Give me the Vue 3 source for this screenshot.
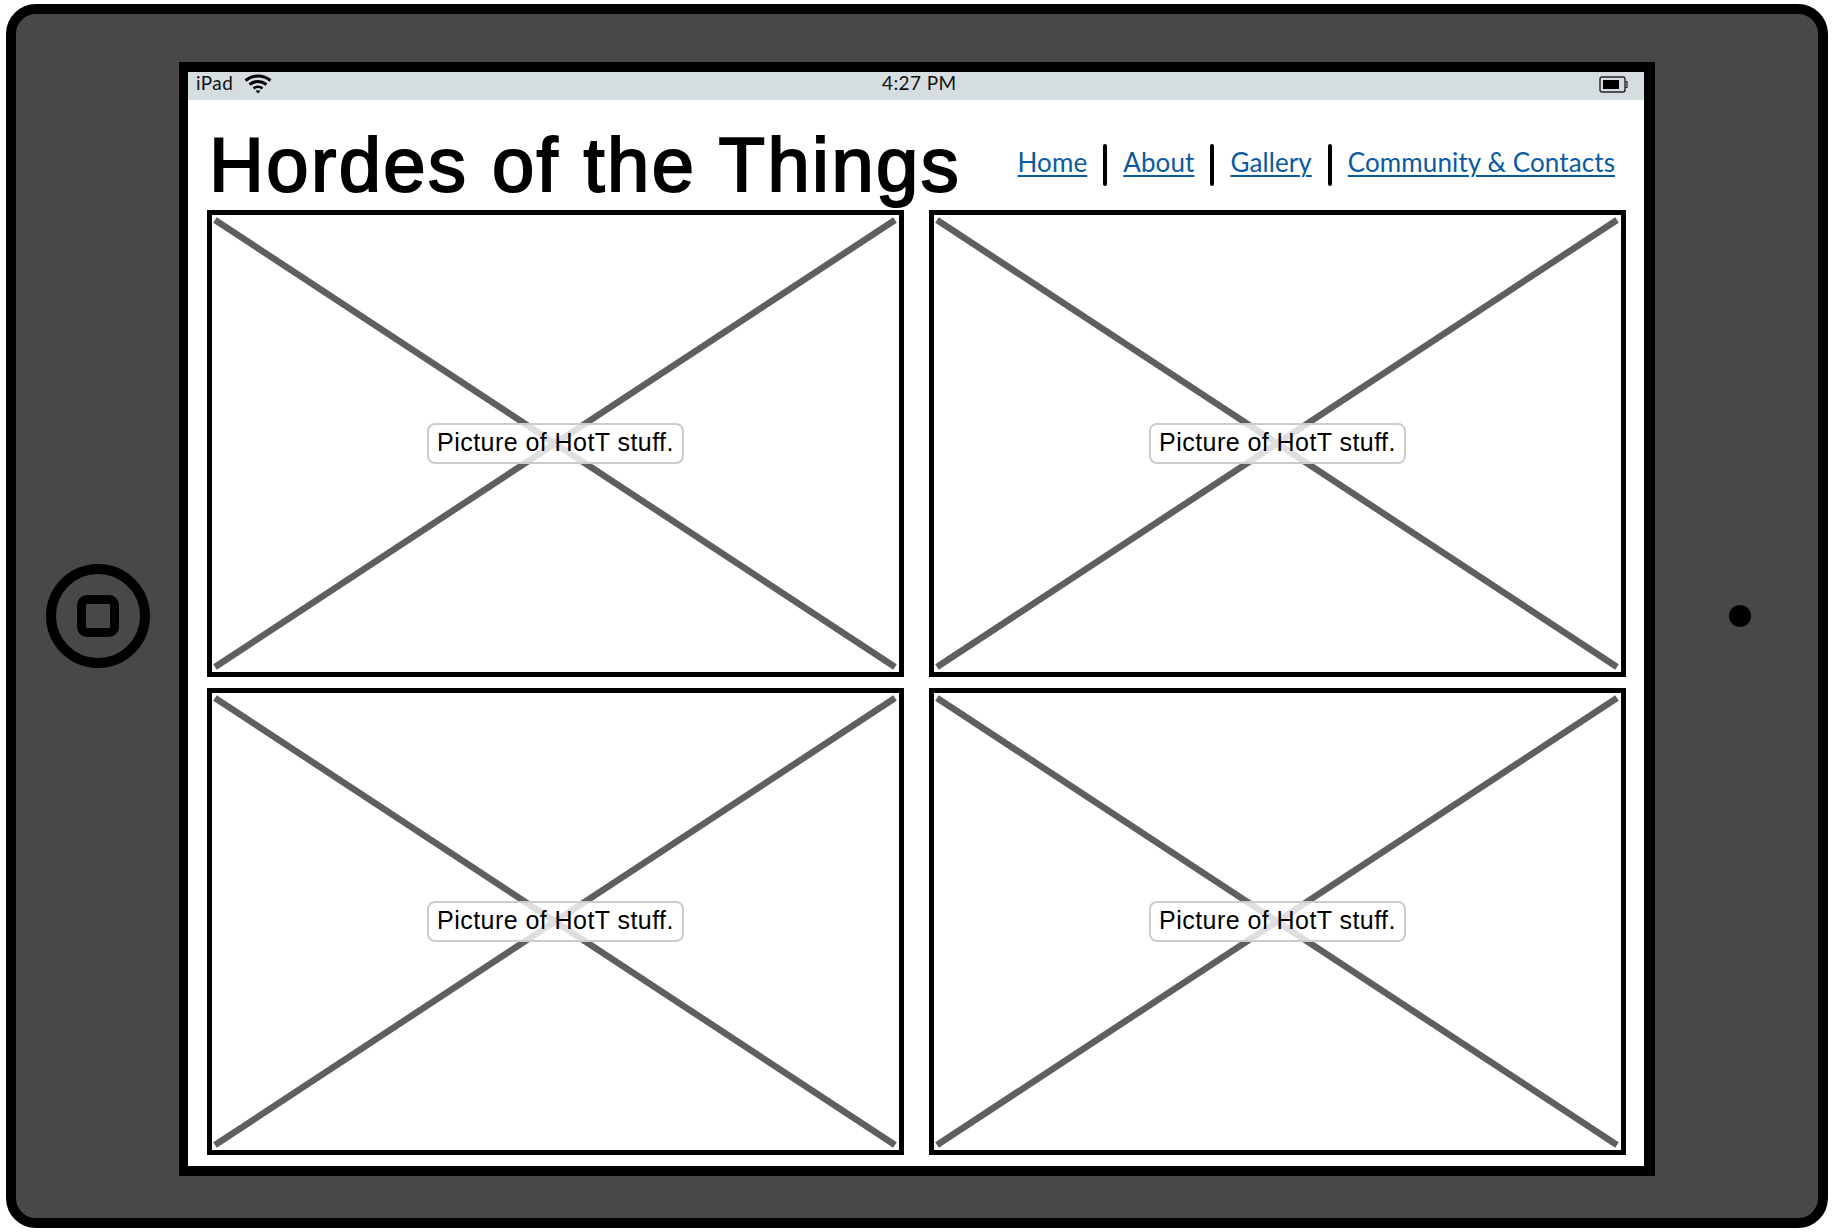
<script setup>
const links = ['Home', 'About', 'Gallery', 'Community & Contacts']
const cards = [1, 2, 3, 4]
</script>

<template>
  <div class="page">
    <div class="device">
      <div class="side">
        <div class="home-btn"><div class="home-square"></div></div>
      </div>
      <div class="screen">
        <div class="status">
          <div class="status-left">
            <span>iPad</span>
            <svg class="wifi" width="28" height="20" viewBox="0 0 28 20">
              <path d="M1.500 6.500C9 .5 19 .5 26.500 6.500" fill="none" stroke="#000" stroke-width="3" />
              <path d="M5.500 10.500C11 6.500 17 6.500 22.500 10.500" fill="none" stroke="#000" stroke-width="3" />
              <path d="M9.500 14.300C12.500 12.300 15.500 12.300 18.500 14.300" fill="none" stroke="#000" stroke-width="2.600" />
              <path d="M11.500 16.800L14 19.500L16.500 16.800C15 15.900 13 15.900 11.500 16.800Z" fill="#000" />
            </svg>
          </div>
          <span class="time">4:27 PM</span>
          <svg class="battery" width="29" height="17" viewBox="0 0 29 17">
            <rect x="1" y="1" width="25" height="15" rx="2" fill="none" stroke="#222" stroke-width="1.4" />
            <rect x="4" y="4" width="16" height="9" fill="#000" />
            <path d="M26.500 5.500H28V11.500H26.500" fill="none" stroke="#222" stroke-width="1.200" />
          </svg>
        </div>
        <header class="top">
          <h1>Hordes of the Things</h1>
          <nav class="nav">
            <template v-for="(l, i) in links" :key="l">
              <span v-if="i > 0" class="divider"></span>
              <a href="#" class="link">{{ l }}</a>
            </template>
          </nav>
        </header>
        <main class="grid">
          <div v-for="c in cards" :key="c" class="card">
            <svg class="cross" viewBox="0 0 687 457" preserveAspectRatio="none">
              <line x1="3" y1="5" x2="683" y2="452" />
              <line x1="683" y1="5" x2="3" y2="452" />
            </svg>
            <div class="label">Picture of HotT stuff.</div>
          </div>
        </main>
      </div>
      <div class="side">
        <div class="dot"></div>
      </div>
    </div>
  </div>
</template>

<style>
html, body {
  margin: 0;
  background: #fff;
}
</style>

<style scoped>
.page {
  width: 1832px;
  height: 1232px;
  padding: 4px 4px 4px 6px;
  box-sizing: border-box;
  font-family: "Lato", "Liberation Sans", sans-serif;
  color: #000;
  overflow: hidden;
}
.device {
  width: 1822px;
  height: 1224px;
  box-sizing: border-box;
  border: 10px solid #000;
  border-radius: 30px;
  background: #484848;
  display: grid;
  grid-template-columns: 163px 1476px 163px;
  padding-top: 48px;
}
.side {
  display: flex;
  align-items: center;
  justify-content: center;
  margin-top: -48px;
}
.home-btn {
  width: 104px;
  height: 104px;
  box-sizing: border-box;
  border: 10px solid #000;
  border-radius: 50%;
  display: flex;
  align-items: center;
  justify-content: center;
}
.home-square {
  width: 42px;
  height: 42px;
  box-sizing: border-box;
  border: 9px solid #000;
  border-radius: 10px;
}
.dot {
  width: 22px;
  height: 22px;
  border-radius: 50%;
  background: #000;
  margin-left: 7px;
}
.screen {
  width: 1476px;
  height: 1114px;
  box-sizing: border-box;
  border-style: solid;
  border-color: #000;
  border-width: 10px 11px 10px 9px;
  background: #fff;
}
.status {
  height: 28px;
  background: #d6dde0;
  display: flex;
  align-items: center;
  justify-content: space-between;
  padding: 0 16px 0 8px;
  position: relative;
  font-size: 19px;
  letter-spacing: 0.4px;
  color: #111;
}
.status-left {
  display: flex;
  align-items: center;
  gap: 11px;
  margin-top: -8px;
}
.wifi {
  margin-top: 3px;
}
.time {
  position: absolute;
  left: 694px;
  top: -1px;
}
.battery {
  margin-top: -3px;
}
.top {
  height: 110px;
  display: flex;
  justify-content: space-between;
  align-items: flex-start;
  padding: 0 29px 0 21px;
}
h1 {
  margin: 10px 0 0;
  font-family: "Liberation Sans", Arial, sans-serif;
  font-size: 76px;
  line-height: 100px;
  font-weight: 400;
  -webkit-text-stroke: 2px #000;
  letter-spacing: 2.4px;
  white-space: nowrap;
  padding-top: 5px;
}
.nav {
  display: flex;
  align-items: center;
  gap: 16px;
  height: 42px;
  margin-top: 44px;
}
.link {
  color: #0b5a9f;
  font-size: 26px;
  line-height: 32px;
  letter-spacing: 0.1px;
  text-decoration: underline;
  text-underline-offset: 3px;
  text-decoration-thickness: 2px;
  margin-bottom: 6px;
}
.divider {
  width: 4px;
  height: 42px;
  background: #000;
  border-radius: 2px;
}
.grid {
  display: grid;
  grid-template-columns: 697px 697px;
  grid-template-rows: 467px 467px;
  column-gap: 25px;
  row-gap: 11px;
  padding-left: 19px;
}
.card {
  position: relative;
  box-sizing: border-box;
  border: 5px solid #000;
  display: flex;
  align-items: center;
  justify-content: center;
}
.cross {
  position: absolute;
  inset: 0;
  width: 100%;
  height: 100%;
}
.cross line {
  stroke: #5f5f5f;
  stroke-width: 6.5;
}
.label {
  position: relative;
  width: 257px;
  height: 41px;
  box-sizing: border-box;
  border: 2px solid #ccc;
  border-radius: 8px;
  background: rgba(255, 255, 255, 0.8);
  font-family: "Liberation Sans", Arial, sans-serif;
  font-size: 25px;
  line-height: 35px;
  letter-spacing: 0.45px;
  text-align: center;
  white-space: nowrap;
}
</style>
